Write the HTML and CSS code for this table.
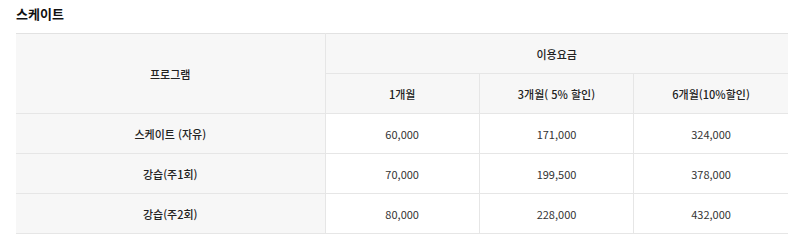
FILE: index.html
```html
<!DOCTYPE html>
<html lang="ko">
<head>
<meta charset="utf-8">
<link rel="stylesheet" href="styles.css">
</head>
<body>
<div class="wrap">
  <h3 class="title">스케이트</h3>
  <table class="price">
    <colgroup>
      <col class="c-prog">
      <col class="c-m">
      <col class="c-m">
      <col class="c-m">
    </colgroup>
    <thead>
      <tr>
        <th rowspan="2" class="prog">프로그램</th>
        <th colspan="3">이용요금</th>
      </tr>
      <tr>
        <th>1개월</th>
        <th>3개월( 5% 할인)</th>
        <th>6개월(10%할인)</th>
      </tr>
    </thead>
    <tbody>
      <tr>
        <th class="prog">스케이트 (자유)</th>
        <td>60,000</td>
        <td>171,000</td>
        <td>324,000</td>
      </tr>
      <tr>
        <th class="prog">강습(주1회)</th>
        <td>70,000</td>
        <td>199,500</td>
        <td>378,000</td>
      </tr>
      <tr>
        <th class="prog">강습(주2회)</th>
        <td>80,000</td>
        <td>228,000</td>
        <td>432,000</td>
      </tr>
    </tbody>
  </table>
</div>
</body>
</html>
```

FILE: styles.css
```css
* { box-sizing: border-box; }
html, body { margin: 0; padding: 0; background: #fff; }
body {
  font-family: "Noto Sans CJK KR", "Noto Sans", sans-serif;
  color: #222;
}
.wrap { padding: 0 12px 0 16px; }
.title {
  margin: 0;
  padding-top: 4px;
  height: 33px;
  font-size: 13px;
  font-weight: 700;
  line-height: 20px;
  color: #111;
}
.price {
  width: 772px;
  border-collapse: collapse;
  table-layout: fixed;
  font-size: 11px;
}
.c-prog { width: 309px; }
.price th, .price td {
  height: 40px;
  padding: 0;
  text-align: center;
  vertical-align: middle;
  border: 1px solid #e6e6e6;
  line-height: 16px;
}
.price tr > :first-child { border-left: 0; }
.price tr > :last-child { border-right: 0; }
.price thead tr:first-child th { border-top: 1px solid #e2e2e2; }
.price th {
  background: #f7f7f7;
  font-weight: 500;
  color: #222;
}
.price td {
  background: #fff;
  color: #333;
}
```
